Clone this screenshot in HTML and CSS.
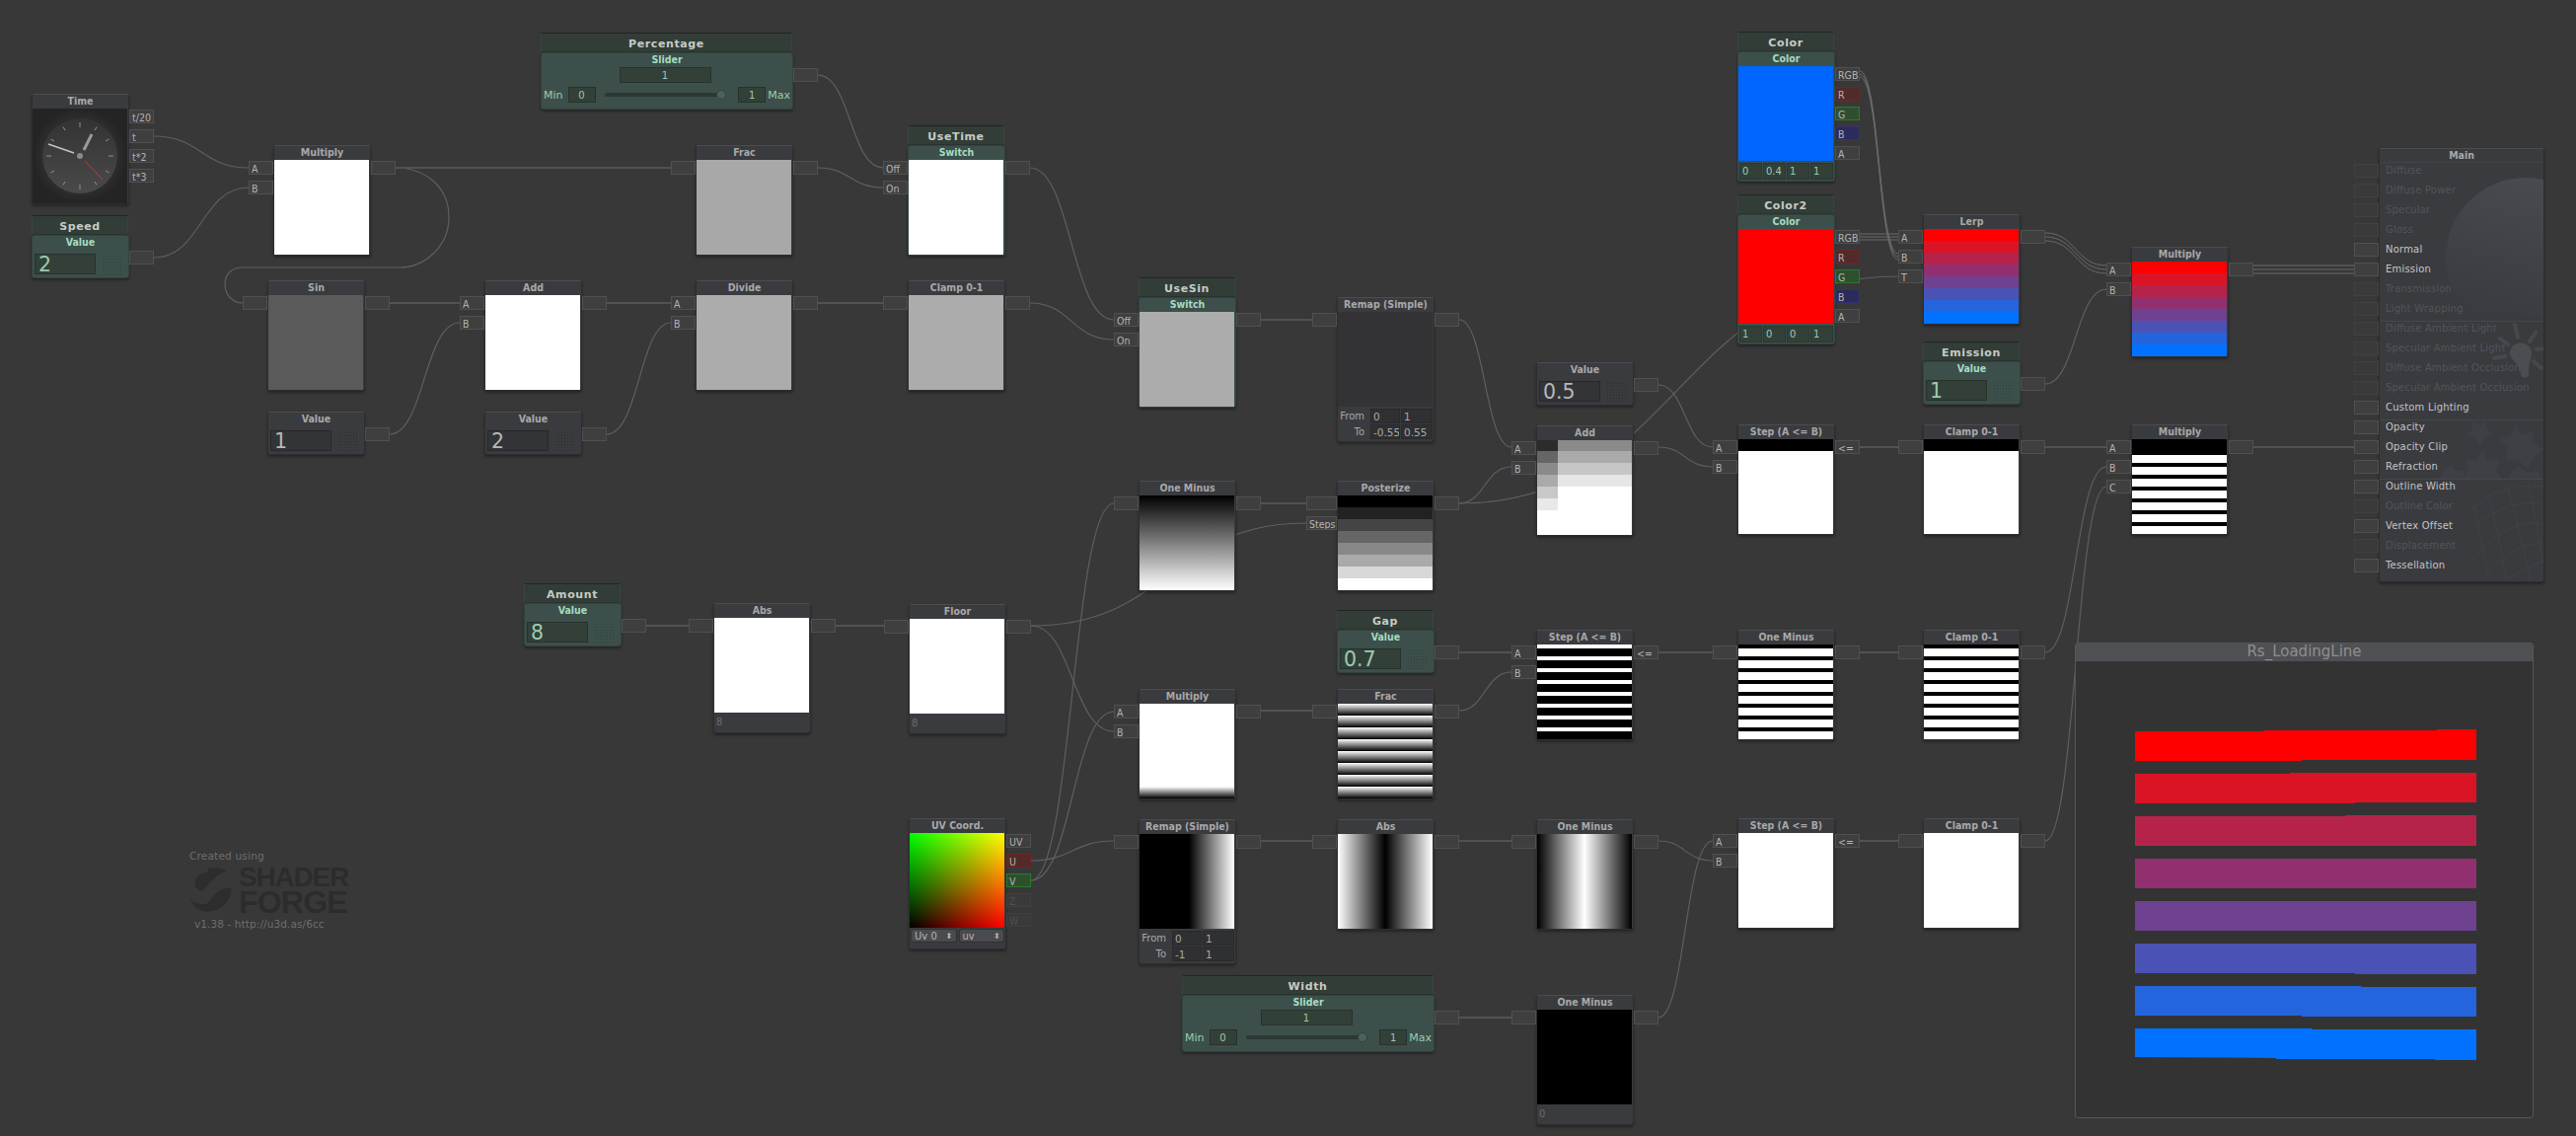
FILE: index.html
```html
<!DOCTYPE html>
<html lang="en">
<head>
<meta charset="utf-8">
<title>Shader Forge - Rs_LoadingLine</title>
<link rel="stylesheet" href="styles.css">
</head>
<body>
<div class="canvas">

<svg class="wires" width="2611" height="1151" viewBox="0 0 2611 1151">
  <g class="curve">
    <path d="M156,138 C204,138 204,170 252,170"/>
    <path d="M156,261 C204,261 204,190 252,190"/>
    <path d="M400,170 C432,170 455,190 455,220 C455,250 430,271 405,271 L245,271 C235,271 228,278 228,288 C228,298 235,307 246,307"/>
    <path d="M395,440 C430,440 430,327 466,327"/>
    <path d="M615,440 C648,440 648,327 680,327"/>
    <path d="M829,76 C862,76 862,170 895,170"/>
    <path d="M829,170 C862,170 862,190 895,190"/>
    <path d="M1044,170 C1086,170 1086,324 1129,324"/>
    <path d="M1044,307 C1086,307 1086,344 1129,344"/>
    <path d="M1479,324 C1505,324 1505,453 1532,453"/>
    <path d="M1681,390 C1708,390 1708,453 1736,453"/>
    <path d="M1681,453 C1708,453 1708,473 1736,473"/>
    <path d="M1479,510 C1505,510 1505,473 1532,473"/>
    <path d="M1479,510 C1700,510 1700,280 1924,280"/>
    <path d="M1045,634 C1185,634 1185,530 1324,530"/>
    <path d="M1045,634 C1087,634 1087,741 1129,741"/>
    <path d="M1045,892 C1087,892 1087,510 1129,510"/>
    <path d="M1045,892 C1087,892 1087,721 1129,721"/>
    <path d="M1045,872 C1087,872 1087,852 1129,852"/>
    <path d="M1479,720 C1505,720 1505,681 1532,681"/>
    <path d="M2073,661 C2104,661 2104,473 2135,473"/>
    <path d="M2073,852 C2104,852 2104,493 2135,493"/>
    <path d="M1681,852 C1708,852 1708,872 1736,872"/>
    <path d="M1681,1031 C1708,1031 1708,852 1736,852"/>
    <path d="M2073,389 C2104,389 2104,293 2135,293"/>
  </g>
  <g class="straight">
    <path d="M400,170 L680,170"/>
    <path d="M395,307 L466,307"/>
    <path d="M615,307 L680,307"/>
    <path d="M829,307 L895,307"/>
    <path d="M1278,324 L1331,324"/>
    <path d="M1885,453 L1924,453"/>
    <path d="M2073,453 L2135,453"/>
    <path d="M2283,453 L2386,453"/>
    <path d="M655,634 L698,634"/>
    <path d="M847,634 L896,634"/>
    <path d="M1278,510 L1324,510"/>
    <path d="M1479,661 L1532,661"/>
    <path d="M1681,661 L1736,661"/>
    <path d="M1885,661 L1924,661"/>
    <path d="M1278,720 L1331,720"/>
    <path d="M1278,852 L1331,852"/>
    <path d="M1479,852 L1532,852"/>
    <path d="M1479,1031 L1532,1031"/>
    <path d="M1885,852 L1924,852"/>
  </g>
  <g class="triple">
    <path d="M1885,72 C1905,72 1904,257 1924,257"/>
    <path d="M1885,75 C1905,75 1904,260 1924,260"/>
    <path d="M1885,78 C1905,78 1904,263 1924,263"/>
    <path d="M1885,237 L1924,237"/>
    <path d="M1885,240 L1924,240"/>
    <path d="M1885,243 L1924,243"/>
    <path d="M2073,236 C2104,236 2104,269 2135,269"/>
    <path d="M2073,240 C2104,240 2104,273 2135,273"/>
    <path d="M2073,244 C2104,244 2104,277 2135,277"/>
    <path d="M2283,269 L2386,269"/>
    <path d="M2283,273 L2386,273"/>
    <path d="M2283,277 L2386,277"/>
  </g>
</svg>

<div class="logo">
  <div class="logo-note">Created using</div>
  <div class="logo-mark">
    <svg class="logo-icon" width="44" height="50" viewBox="65 112 135 150">
      <path d="M122,116 C150,112 168,116 180,124 C152,132 130,160 108,184 C96,190 80,174 82,160 C85,140 102,128 124,128 Z"/>
      <path d="M196,178 C170,170 142,194 126,220 C114,234 90,228 68,212 C74,236 100,252 126,250 C166,246 194,216 196,178 Z"/>
    </svg>
    <div class="logo-words">
      <div class="logo-shader">SHADER</div>
      <div class="logo-forge">FORGE</div>
    </div>
  </div>
  <div class="logo-version">v1.38 - http://u3d.as/6cc</div>
</div>

<!-- Time -->
<div class="node n-time">
  <div class="head">Time</div>
  <svg class="clock" width="96" height="96" viewBox="0 0 96 96">
    <defs>
      <radialGradient id="clockBg"><stop offset="0.5" stop-color="#3a3a3a"/><stop offset="1" stop-color="#242424"/></radialGradient>
      <linearGradient id="clockFace" x1="0" y1="0" x2="0" y2="1"><stop offset="0" stop-color="#333"/><stop offset="1" stop-color="#4a4a4a"/></linearGradient>
    </defs>
    <rect width="96" height="96" fill="url(#clockBg)"/>
    <circle cx="48" cy="48" r="38.5" fill="url(#clockFace)" stroke="#2c2c2c"/>
    <g class="ticks">
      <path d="M48,14V19M48,77V82M14,48H19M77,48H82M65,18.6L63,22M31,18.6L33,22M77.4,31L74,33M18.6,31L22,33M77.4,65L74,63M18.6,65L22,63M65,77.4L63,74M31,77.4L33,74"/>
    </g>
    <path class="hand-h" d="M52,42L60,26"/>
    <path class="hand-m" d="M42,45L16,36"/>
    <path class="hand-s" d="M53,53L71,72"/>
    <circle cx="48" cy="48" r="3" fill="#8a8a8a"/>
  </svg>
  <div class="ports out">
    <div class="port">t/20</div><div class="port">t</div><div class="port">t*2</div><div class="port">t*3</div>
  </div>
</div>

<!-- Speed -->
<div class="node param n-speed">
  <div class="title">Speed</div>
  <div class="body">
    <div class="head">Value</div>
    <div class="value-row"><div class="val">2</div><div class="dots"></div></div>
  </div>
  <div class="ports out"><div class="port"></div></div>
</div>

<!-- Percentage -->
<div class="node param wide n-percentage">
  <div class="title">Percentage</div>
  <div class="body">
    <div class="head">Slider</div>
    <div class="slider-val">1</div>
    <div class="slider-row">
      <span>Min</span><span class="box">0</span>
      <div class="track"><div class="thumb"></div></div>
      <span class="box">1</span><span>Max</span>
    </div>
  </div>
  <div class="ports out"><div class="port"></div></div>
</div>

<div class="node n-multiply1">
  <div class="head">Multiply</div><div class="pv white"></div>
  <div class="ports in"><div class="port">A</div><div class="port">B</div></div>
  <div class="ports out"><div class="port"></div></div>
</div>

<div class="node n-frac1">
  <div class="head">Frac</div><div class="pv gray-a8"></div>
  <div class="ports in"><div class="port"></div></div>
  <div class="ports out"><div class="port"></div></div>
</div>

<div class="node param n-usetime">
  <div class="title">UseTime</div>
  <div class="body">
    <div class="head">Switch</div><div class="pv white"></div>
  </div>
  <div class="ports in"><div class="port">Off</div><div class="port">On</div></div>
  <div class="ports out"><div class="port"></div></div>
</div>

<div class="node n-sin">
  <div class="head">Sin</div><div class="pv gray-5a"></div>
  <div class="ports in"><div class="port"></div></div>
  <div class="ports out"><div class="port"></div></div>
</div>

<div class="node n-add1">
  <div class="head">Add</div><div class="pv white"></div>
  <div class="ports in"><div class="port">A</div><div class="port">B</div></div>
  <div class="ports out"><div class="port"></div></div>
</div>

<div class="node n-divide">
  <div class="head">Divide</div><div class="pv gray-ac"></div>
  <div class="ports in"><div class="port">A</div><div class="port">B</div></div>
  <div class="ports out"><div class="port"></div></div>
</div>

<div class="node n-clamp1">
  <div class="head">Clamp 0-1</div><div class="pv gray-ac"></div>
  <div class="ports in"><div class="port"></div></div>
  <div class="ports out"><div class="port"></div></div>
</div>

<div class="node valnode n-value1">
  <div class="head">Value</div>
  <div class="value-row"><div class="val">1</div><div class="dots"></div></div>
  <div class="ports out"><div class="port"></div></div>
</div>

<div class="node valnode n-value2">
  <div class="head">Value</div>
  <div class="value-row"><div class="val">2</div><div class="dots"></div></div>
  <div class="ports out"><div class="port"></div></div>
</div>

<div class="node param n-usesin">
  <div class="title">UseSin</div>
  <div class="body">
    <div class="head">Switch</div><div class="pv gray-ac"></div>
  </div>
  <div class="ports in"><div class="port">Off</div><div class="port">On</div></div>
  <div class="ports out"><div class="port"></div></div>
</div>

<div class="node n-remap1">
  <div class="head">Remap (Simple)</div><div class="pv dark"></div>
  <div class="remap">
    <span class="lbl">From</span><span class="cell">0</span><span class="cell">1</span>
    <span class="lbl">To</span><span class="cell">-0.55</span><span class="cell">0.55</span>
  </div>
  <div class="ports in"><div class="port"></div></div>
  <div class="ports out"><div class="port"></div></div>
</div>

<div class="node valnode n-value3">
  <div class="head">Value</div>
  <div class="value-row"><div class="val">0.5</div><div class="dots"></div></div>
  <div class="ports out"><div class="port"></div></div>
</div>

<div class="node n-add2">
  <div class="head">Add</div><div class="pv add-stairs"></div>
  <div class="ports in"><div class="port">A</div><div class="port">B</div></div>
  <div class="ports out"><div class="port"></div></div>
</div>

<div class="node n-oneminus1">
  <div class="head">One Minus</div><div class="pv ramp-down"></div>
  <div class="ports in"><div class="port"></div></div>
  <div class="ports out"><div class="port"></div></div>
</div>

<div class="node n-posterize">
  <div class="head">Posterize</div><div class="pv posterize"></div>
  <div class="ports in"><div class="port wide-port"></div><div class="port wide-port">Steps</div></div>
  <div class="ports out"><div class="port"></div></div>
</div>

<!-- Amount -->
<div class="node param n-amount">
  <div class="title">Amount</div>
  <div class="body">
    <div class="head">Value</div>
    <div class="value-row"><div class="val">8</div><div class="dots"></div></div>
  </div>
  <div class="ports out"><div class="port"></div></div>
</div>

<div class="node n-abs1">
  <div class="head">Abs</div><div class="pv white"></div>
  <div class="foot">8</div>
  <div class="ports in"><div class="port"></div></div>
  <div class="ports out"><div class="port"></div></div>
</div>

<div class="node n-floor">
  <div class="head">Floor</div><div class="pv white"></div>
  <div class="foot">8</div>
  <div class="ports in"><div class="port"></div></div>
  <div class="ports out"><div class="port"></div></div>
</div>

<div class="node param n-gap">
  <div class="title">Gap</div>
  <div class="body">
    <div class="head">Value</div>
    <div class="value-row"><div class="val">0.7</div><div class="dots"></div></div>
  </div>
  <div class="ports out"><div class="port"></div></div>
</div>

<div class="node n-step2">
  <div class="head">Step (A &lt;= B)</div><div class="pv stripes-w4"></div>
  <div class="ports in"><div class="port">A</div><div class="port">B</div></div>
  <div class="ports out"><div class="port">&lt;=</div></div>
</div>

<div class="node n-multiply2">
  <div class="head">Multiply</div><div class="pv white-fade"></div>
  <div class="ports in"><div class="port">A</div><div class="port">B</div></div>
  <div class="ports out"><div class="port"></div></div>
</div>

<div class="node n-frac2">
  <div class="head">Frac</div><div class="pv frac-bands"></div>
  <div class="ports in"><div class="port"></div></div>
  <div class="ports out"><div class="port"></div></div>
</div>

<!-- UV -->
<div class="node n-uv">
  <div class="head">UV Coord.</div><div class="pv uv"></div>
  <div class="selects">
    <div class="select"><span>Uv 0</span><span class="updown">⬍</span></div>
    <div class="select"><span>uv</span><span class="updown">⬍</span></div>
  </div>
  <div class="ports out">
    <div class="port">UV</div><div class="port red">U</div><div class="port green">V</div><div class="port off">Z</div><div class="port off">W</div>
  </div>
</div>

<div class="node n-remap2">
  <div class="head">Remap (Simple)</div><div class="pv ramp-right"></div>
  <div class="remap">
    <span class="lbl">From</span><span class="cell">0</span><span class="cell">1</span>
    <span class="lbl">To</span><span class="cell">-1</span><span class="cell">1</span>
  </div>
  <div class="ports in"><div class="port"></div></div>
  <div class="ports out"><div class="port"></div></div>
</div>

<div class="node n-abs2">
  <div class="head">Abs</div><div class="pv v-dark-center"></div>
  <div class="ports in"><div class="port"></div></div>
  <div class="ports out"><div class="port"></div></div>
</div>

<div class="node n-oneminus3">
  <div class="head">One Minus</div><div class="pv v-light-center"></div>
  <div class="ports in"><div class="port"></div></div>
  <div class="ports out"><div class="port"></div></div>
</div>

<div class="node param wide n-width">
  <div class="title">Width</div>
  <div class="body">
    <div class="head">Slider</div>
    <div class="slider-val">1</div>
    <div class="slider-row">
      <span>Min</span><span class="box">0</span>
      <div class="track"><div class="thumb"></div></div>
      <span class="box">1</span><span>Max</span>
    </div>
  </div>
  <div class="ports out"><div class="port"></div></div>
</div>

<div class="node n-oneminus4">
  <div class="head">One Minus</div><div class="pv black"></div>
  <div class="foot">0</div>
  <div class="ports in"><div class="port"></div></div>
  <div class="ports out"><div class="port"></div></div>
</div>

<!-- Colors -->
<div class="node param n-color">
  <div class="title">Color</div>
  <div class="body">
    <div class="head">Color</div><div class="pv blue"></div>
    <div class="cells"><span>0</span><span>0.4</span><span>1</span><span>1</span></div>
  </div>
  <div class="ports out">
    <div class="port">RGB</div><div class="port red">R</div><div class="port green">G</div><div class="port blue-port">B</div><div class="port">A</div>
  </div>
</div>

<div class="node param n-color2">
  <div class="title">Color2</div>
  <div class="body">
    <div class="head">Color</div><div class="pv red-fill"></div>
    <div class="cells"><span>1</span><span>0</span><span>0</span><span>1</span></div>
  </div>
  <div class="ports out">
    <div class="port">RGB</div><div class="port red">R</div><div class="port green">G</div><div class="port blue-port">B</div><div class="port">A</div>
  </div>
</div>

<div class="node n-lerp">
  <div class="head">Lerp</div><div class="pv bands"></div>
  <div class="ports in"><div class="port">A</div><div class="port">B</div><div class="port">T</div></div>
  <div class="ports out"><div class="port"></div></div>
</div>

<div class="node n-multiply3">
  <div class="head">Multiply</div><div class="pv bands"></div>
  <div class="ports in"><div class="port">A</div><div class="port">B</div></div>
  <div class="ports out"><div class="port"></div></div>
</div>

<div class="node param n-emission">
  <div class="title">Emission</div>
  <div class="body">
    <div class="head">Value</div>
    <div class="value-row"><div class="val">1</div><div class="dots"></div></div>
  </div>
  <div class="ports out"><div class="port"></div></div>
</div>

<div class="node n-step1">
  <div class="head">Step (A &lt;= B)</div><div class="pv top-black"></div>
  <div class="ports in"><div class="port">A</div><div class="port">B</div></div>
  <div class="ports out"><div class="port">&lt;=</div></div>
</div>

<div class="node n-clamp2">
  <div class="head">Clamp 0-1</div><div class="pv top-black"></div>
  <div class="ports in"><div class="port"></div></div>
  <div class="ports out"><div class="port"></div></div>
</div>

<div class="node n-multiply4">
  <div class="head">Multiply</div><div class="pv stripes-final"></div>
  <div class="ports in"><div class="port">A</div><div class="port">B</div><div class="port">C</div></div>
  <div class="ports out"><div class="port"></div></div>
</div>

<div class="node n-oneminus2">
  <div class="head">One Minus</div><div class="pv stripes-b4"></div>
  <div class="ports in"><div class="port"></div></div>
  <div class="ports out"><div class="port"></div></div>
</div>

<div class="node n-clamp3">
  <div class="head">Clamp 0-1</div><div class="pv stripes-b4"></div>
  <div class="ports in"><div class="port"></div></div>
  <div class="ports out"><div class="port"></div></div>
</div>

<div class="node n-step3">
  <div class="head">Step (A &lt;= B)</div><div class="pv white"></div>
  <div class="ports in"><div class="port">A</div><div class="port">B</div></div>
  <div class="ports out"><div class="port">&lt;=</div></div>
</div>

<div class="node n-clamp4">
  <div class="head">Clamp 0-1</div><div class="pv white"></div>
  <div class="ports in"><div class="port"></div></div>
  <div class="ports out"><div class="port"></div></div>
</div>

<!-- Main -->
<div class="node n-main">
  <svg class="main-art" width="166" height="439" viewBox="0 0 166 439">
    <defs>
      <linearGradient id="sphere" x1="0.7" y1="0" x2="0.4" y2="1"><stop offset="0" stop-color="#4a4b50"/><stop offset="0.85" stop-color="#3b3c41"/></linearGradient>
      <clipPath id="sphereClip"><rect width="166" height="171"/></clipPath>
    </defs>
    <circle cx="148" cy="110" r="81" fill="url(#sphere)" clip-path="url(#sphereClip)"/>
    <g class="rays"><path d="M137,178L140,191M158,186L152,195M122,192L130,198M116,212L127,210M167,202L159,203M156,215L164,222"/></g>
    <path class="bulb" d="M132,207 C132,193 154,193 154,207 C154,213 151,216 151,228 C151,233 143,233 143,228 C142,216 132,214 132,207 Z"/>
    <g class="leaves">
      <path d="M94,276 L102,280 L108,275 L108,283 L114,288 L106,292 L102,300 L97,292 L88,290 L94,284 Z"/>
      <path d="M138,278 L144,290 L156,286 L154,298 L166,304 L156,312 L150,324 L140,314 L128,316 L130,302 L122,294 L134,290 Z"/>
      <path d="M104,304 L110,316 L122,314 L118,326 L124,334 L84,334 L90,326 L86,314 L98,316 Z"/>
      <path d="M72,320 L78,326 L86,326 L84,334 L60,334 L64,326 Z"/>
      <path d="M140,322 L150,328 L160,326 L164,334 L130,334 L134,326 Z"/>
    </g>
    <g class="mesh">
      <path d="M90,370 C110,345 140,338 166,342M86,395 C110,365 140,355 166,360M90,420 C115,390 140,375 166,380M108,432 C125,412 145,398 166,400M130,436 C140,428 155,420 166,418"/>
      <path d="M110,350 C118,380 125,410 128,438M130,342 C138,375 148,410 152,438M150,338 C156,365 162,395 166,420M96,362 C100,385 106,410 110,432"/>
    </g>
  </svg>
  <div class="main-head">Main</div>
  <div class="main-rows">
    <div class="row off"><div class="port"></div>Diffuse</div>
    <div class="row off"><div class="port"></div>Diffuse Power</div>
    <div class="row off"><div class="port"></div>Specular</div>
    <div class="row off"><div class="port"></div>Gloss</div>
    <div class="row"><div class="port"></div>Normal</div>
    <div class="row"><div class="port"></div>Emission</div>
    <div class="row off"><div class="port"></div>Transmission</div>
    <div class="row off sep"><div class="port"></div>Light Wrapping</div>
    <div class="row off"><div class="port"></div>Diffuse Ambient Light</div>
    <div class="row off"><div class="port"></div>Specular Ambient Light</div>
    <div class="row off"><div class="port"></div>Diffuse Ambient Occlusion</div>
    <div class="row off"><div class="port"></div>Specular Ambient Occlusion</div>
    <div class="row sep"><div class="port"></div>Custom Lighting</div>
    <div class="row"><div class="port"></div>Opacity</div>
    <div class="row"><div class="port"></div>Opacity Clip</div>
    <div class="row sep"><div class="port"></div>Refraction</div>
    <div class="row"><div class="port"></div>Outline Width</div>
    <div class="row off"><div class="port"></div>Outline Color</div>
    <div class="row"><div class="port"></div>Vertex Offset</div>
    <div class="row off"><div class="port"></div>Displacement</div>
    <div class="row"><div class="port"></div>Tessellation</div>
  </div>
</div>

<!-- Preview window -->
<div class="preview-win">
  <div class="preview-head">Rs_LoadingLine</div>
  <svg class="preview-art" width="463" height="462" viewBox="2104 670 463 462">
    <polygon fill="#ff0000" points="2164,741 2295,741 2295,740 2470,740 2470,739 2510,739 2510,770 2333,770 2333,771 2164,771"/>
    <polygon fill="#da1425" points="2164,784 2321,784 2321,783 2510,783 2510,813 2387,813 2387,814 2164,814"/>
    <polygon fill="#b6234a" points="2164,827 2377,827 2377,826 2510,826 2510,857 2164,857"/>
    <polygon fill="#92306f" points="2164,870 2510,870 2510,900 2164,900"/>
    <polygon fill="#6e4290" points="2164,913 2510,913 2510,943 2164,943"/>
    <polygon fill="#4a52b5" points="2164,956 2510,956 2510,987 2387,987 2387,986 2164,986"/>
    <polygon fill="#2464dc" points="2164,999 2393,999 2393,1000 2510,1000 2510,1030 2333,1030 2333,1029 2164,1029"/>
    <polygon fill="#0072ff" points="2164,1042 2343,1042 2343,1043 2510,1043 2510,1074 2468,1074 2468,1073 2307,1073 2307,1072 2164,1071"/>
  </svg>
</div>

</div>
</body>
</html>
```

FILE: styles.css
```css
* { box-sizing: border-box; }
html, body { margin: 0; padding: 0; background: #383838; overflow: hidden; }

.canvas {
  position: relative;
  width: 2611px;
  height: 1151px;
  overflow: hidden;
  background: #383838;
  font-family: "DejaVu Sans", "Liberation Sans", sans-serif;
  font-size: 10px;
  color: #a9a9a9;
}

/* wires */
.wires { position: absolute; left: 0; top: 0; fill: none; }
.curve path { stroke: #5f5f5f; stroke-width: 1.2; }
.straight path { stroke: #525252; stroke-width: 2.2; }
.triple path { stroke: #6a6a6a; stroke-width: 1; }

/* nodes */
.node {
  position: absolute;
  width: 99px;
  background: #3a3b3f;
  border: 1px solid #2e2e30;
  border-top-color: #4c4d51;
  border-radius: 3px;
  box-shadow: 0 2px 3px rgba(0, 0, 0, .35);
}
.head {
  height: 14px;
  line-height: 13px;
  text-align: center;
  font-family: "DejaVu Sans Condensed", "DejaVu Sans", sans-serif;
  font-stretch: condensed;
  font-weight: bold;
  font-size: 10.5px;
  color: #a8a8a8;
  background: #3a3b3f;
  white-space: nowrap;
}
.pv { width: 96px; height: 96px; }

.ports {
  position: absolute;
  top: 15px;
  display: flex;
  flex-direction: column;
  gap: 6px;
}
.ports.in { right: 100%; margin-right: 1px; align-items: flex-end; }
.ports.out { left: 100%; margin-left: 1px; }
.port {
  width: 25px;
  height: 14px;
  line-height: 14px;
  padding-left: 2px;
  background: #3f3f3f;
  border: 1px solid #505050;
  color: #b4b4b4;
  font-family: "DejaVu Sans Condensed", "DejaVu Sans", sans-serif;
  font-stretch: condensed;
  font-size: 10.5px;
  white-space: nowrap;
  overflow: hidden;
}
.port.wide-port { width: 31px; }
.port.red { background: #522a2a; border-color: #6e2626; }
.port.green { background: #2e4f2e; border-color: #2a7a2a; }
.port.blue-port { background: #2b2b5c; border-color: #33336e; }
.port.off { background: #3a3a3a; border-color: #404040; color: #4f4f4f; }

/* params */
.param { background: none; border: 0; box-shadow: none; }
.param .ports { top: 36px; }
.param .ports.in { margin-right: 0; }
.param .ports.out { margin-left: 0; }
.title {
  width: 98px;
  height: 20px;
  line-height: 21px;
  text-align: center;
  font-weight: bold;
  font-size: 11px;
  letter-spacing: .6px;
  color: #c6cbc6;
  background: #323d37;
  border-top: 1px solid #1f2623;
  border-bottom: 1px solid #2a332e;
  border-left: 1px solid #39443e;
  border-right: 1px solid #39443e;
}
.param .body {
  width: 99px;
  border: 1px solid #33433e;
  border-radius: 3px;
  background: #3c4f4b;
  box-shadow: 0 2px 3px rgba(0, 0, 0, .35);
}
.param .head { background: none; color: #a6dcc0; }
.value-row { display: flex; align-items: center; gap: 6px; padding: 5px 2px 4px; height: 28px; }
.val {
  width: 62px;
  height: 21px;
  line-height: 20px;
  padding-left: 3px;
  font-size: 20.5px;
  color: #b8b8b8;
  background: #333438;
  border: 1px solid #28282a;
}
.param .val { background: #324038; border-color: #27322d; color: #9ccbb0; }
.dots {
  width: 20px;
  height: 20px;
  background-image: radial-gradient(circle, #2d2e30 .8px, transparent 1px);
  background-size: 3px 3px;
}
.param .dots { background-image: radial-gradient(circle, #31423c .8px, transparent 1px); }
.valnode { height: 44px; }

/* sliders */
.wide { width: 256px; }
.wide .title { width: 255px; }
.wide .body { width: 256px; height: 58px; }
.slider-val {
  width: 93px;
  height: 16px;
  line-height: 15px;
  margin: 0 auto;
  position: relative;
  left: -2px;
  text-align: center;
  font-size: 10px;
  color: #9ccbb0;
  background: #324038;
  border: 1px solid #27322d;
}
.slider-row {
  display: flex;
  align-items: center;
  gap: 2px;
  padding: 4px 2px 0;
  font-size: 11px;
  color: #9ccbb0;
}
.box {
  width: 28px;
  height: 16px;
  line-height: 15px;
  margin-left: 3px;
  text-align: center;
  font-size: 10px;
  background: #324038;
  border: 1px solid #27322d;
}
.track {
  position: relative;
  flex: 1;
  height: 4px;
  margin: 0 7px;
  border-radius: 2px;
  background: #2b3833;
}
.thumb {
  position: absolute;
  right: 0;
  top: -3px;
  width: 10px;
  height: 10px;
  border-radius: 50%;
  background: #4b6259;
  border: 1px solid #33433e;
}

/* preview fills */
.white { background: #fff; }
.black { background: #000; }
.dark { background: #333335; }
.gray-a8 { background: #a8a8a8; }
.gray-ac { background: #acacac; }
.gray-5a { background: #5a5a5a; }
.blue { background: #0066ff; }
.red-fill { background: #ff0000; }
.ramp-down { background: linear-gradient(#000, #fff); }
.ramp-right { background: linear-gradient(to right, #000 52%, #fff 100%); }
.v-dark-center { background: linear-gradient(to right, #fff, #000 50%, #fff); }
.v-light-center { background: linear-gradient(to right, #000, #fff 50%, #000); }
.white-fade { background: linear-gradient(#fff 84px, #000 96px); }
.frac-bands { background: repeating-linear-gradient(#fff 0, #000 12px); }
.stripes-w4 { background: repeating-linear-gradient(#fff 0, #fff 4px, #000 4px, #000 12px); }
.stripes-b4 { background: repeating-linear-gradient(#000 0, #000 4px, #fff 4px, #fff 12px); }
.top-black { background: linear-gradient(#000 12px, #fff 12px); }
.stripes-final {
  background:
    linear-gradient(#000 16px, transparent 16px),
    repeating-linear-gradient(#000 0, #000 4px, #fff 4px, #fff 12px);
}
.posterize {
  background: linear-gradient(#000 0 12px, #222 12px 24px, #444 24px 36px, #666 36px 48px, #888 48px 60px, #aaa 60px 72px, #d8d8d8 72px 84px, #fff 84px);
}
.bands {
  background: linear-gradient(#ff0000 0 12px, #da1425 12px 24px, #b6234a 24px 36px, #92306f 36px 48px, #6e4290 48px 60px, #4a52b5 60px 72px, #2464dc 72px 84px, #0072ff 84px);
}
.add-stairs {
  background:
    linear-gradient(#2c2c2c 0 11px, #666 11px 23px, #8a8a8a 23px 35px, #aaa 35px 47px, #c8c8c8 47px 59px, #e8e8e8 59px 71px, #fff 71px) left top / 21px 100% no-repeat,
    linear-gradient(#8a8a8a 0 11px, #aaa 11px 23px, #c6c6c6 23px 35px, #e6e6e6 35px 47px, #fff 47px);
}
.uv {
  background-image: linear-gradient(to right, #000, #f00), linear-gradient(to top, #000, #0f0);
  background-blend-mode: screen;
}

/* footers */
.foot { height: 20px; line-height: 20px; padding-left: 2px; color: #6c6c6c; font-size: 10px; }
.remap {
  display: grid;
  grid-template-columns: 32px 30px 32px;
  grid-auto-rows: 15px;
  row-gap: 1px;
  column-gap: 1px;
  padding: 2px 0 2px;
}
.lbl { line-height: 15px; text-align: right; padding-right: 5px; color: #a8a8a8; }
.cell {
  overflow: hidden;
  white-space: nowrap;
  line-height: 14px;
  padding-left: 2px;
  font-size: 10.5px;
  background: #2f3032;
  border: 1px solid #2a2a2c;
  color: #a8a8a8;
}
.cells {
  display: flex;
  gap: 1px;
  padding: 2px 1px 1px;
  color: #9ccbb0;
}
.cells span {
  width: 23px;
  height: 17px;
  line-height: 15px;
  padding-left: 2px;
  background: #324038;
  border: 1px solid #2a3631;
  overflow: hidden;
  white-space: nowrap;
}
.selects { display: flex; gap: 2px; padding: 1px 1px 6px; }
.select {
  flex: 1;
  height: 14px;
  line-height: 13px;
  display: flex;
  justify-content: space-between;
  padding: 0 3px;
  border-radius: 3px;
  background: #4a4b4e;
  border: 1px solid #303032;
  color: #b4b4b4;
}
.updown { font-size: 8px; }

/* clock */
.clock { display: block; }
.ticks path { stroke: #909090; stroke-width: 1; fill: none; }
.hand-h { stroke: #9a9a9a; stroke-width: 3; }
.hand-m { stroke: #c4c4c4; stroke-width: 1.5; }
.hand-s { stroke: #c23a3a; stroke-width: 1; }

/* main */
.n-main { width: 168px; height: 440px; background: #3a3b3f; overflow: visible; }
.main-art { position: absolute; left: 0; top: 0; }
.rays path { stroke: #47484c; stroke-width: 4; stroke-linecap: round; fill: none; }
.bulb { fill: #4c4d51; }
.leaves path { fill: #3f4045; }
.mesh path { stroke: #444549; stroke-width: .7; fill: none; }
.main-head {
  position: relative;
  height: 14px;
  line-height: 13px;
  text-align: center;
  font-family: "DejaVu Sans Condensed", "DejaVu Sans", sans-serif;
  font-stretch: condensed;
  font-weight: bold;
  font-size: 10.5px;
  color: #a8a8a8;
  border-bottom: 1px solid #434448;
}
.main-rows { position: relative; padding-top: 1px; }
.row {
  position: relative;
  height: 20px;
  line-height: 14px;
  padding-left: 6px;
  letter-spacing: .2px;
  color: #c4c4c4;
  white-space: nowrap;
}
.row .port { position: absolute; right: 100%; top: 0; margin-right: 1px; }
.row.off { color: #52535a; }
.row.off .port { background: #3a3a3a; border-color: #414141; }
.row.sep { border-bottom: 1px solid #46474b; }

/* preview window */
.preview-win {
  position: absolute;
  left: 2103px;
  top: 651px;
  width: 465px;
  height: 482px;
  background: #333333;
  border: 1px solid #555659;
  border-radius: 3px;
  overflow: hidden;
}
.preview-head {
  height: 18px;
  line-height: 17px;
  text-align: center;
  font-size: 15px;
  color: #8e8e90;
  background: #4f5054;
}
.preview-art { display: block; }

/* logo */
.logo { position: absolute; left: 192px; top: 860px; width: 165px; }
.logo-note { font-size: 10.5px; line-height: 14px; color: #6e6e6e; letter-spacing: .2px; }
.logo-mark { display: flex; gap: 6px; margin-top: 3px; }
.logo-icon { display: block; margin-top: 1px; }
.logo-icon path { fill: #2d2d2d; }
.logo-words { font-family: "Liberation Sans", Arial, sans-serif; font-weight: bold; color: #2c2c2c; }
.logo-shader { font-size: 28px; line-height: 24px; letter-spacing: -1.2px; }
.logo-forge { font-size: 32px; line-height: 26px; letter-spacing: -.8px; }
.logo-version { margin-top: 1px; padding-left: 5px; font-size: 10.5px; line-height: 14px; color: #6e6e6e; letter-spacing: .1px; }

/* node places on the canvas */
.n-time { left: 32px; top: 95px; }
.n-speed { left: 32px; top: 218px; }
.n-percentage { left: 548px; top: 33px; }
.n-multiply1 { left: 277px; top: 147px; }
.n-frac1 { left: 705px; top: 147px; }
.n-usetime { left: 920px; top: 127px; }
.n-sin { left: 271px; top: 284px; }
.n-add1 { left: 491px; top: 284px; }
.n-divide { left: 705px; top: 284px; }
.n-clamp1 { left: 920px; top: 284px; }
.n-value1 { left: 271px; top: 417px; }
.n-value2 { left: 491px; top: 417px; }
.n-usesin { left: 1154px; top: 281px; }
.n-remap1 { left: 1355px; top: 301px; }
.n-value3 { left: 1557px; top: 367px; }
.n-add2 { left: 1557px; top: 431px; }
.n-oneminus1 { left: 1154px; top: 487px; }
.n-posterize { left: 1355px; top: 487px; }
.n-amount { left: 531px; top: 591px; }
.n-abs1 { left: 723px; top: 611px; }
.n-floor { left: 921px; top: 612px; }
.n-gap { left: 1355px; top: 618px; }
.n-step2 { left: 1557px; top: 638px; }
.n-multiply2 { left: 1154px; top: 698px; }
.n-frac2 { left: 1355px; top: 698px; }
.n-uv { left: 921px; top: 829px; }
.n-remap2 { left: 1154px; top: 830px; }
.n-abs2 { left: 1355px; top: 830px; }
.n-oneminus3 { left: 1557px; top: 830px; }
.n-width { left: 1198px; top: 988px; }
.n-oneminus4 { left: 1557px; top: 1008px; }
.n-color { left: 1761px; top: 32px; }
.n-color2 { left: 1761px; top: 197px; }
.n-lerp { left: 1949px; top: 217px; }
.n-multiply3 { left: 2160px; top: 250px; }
.n-emission { left: 1949px; top: 346px; }
.n-step1 { left: 1761px; top: 430px; }
.n-clamp2 { left: 1949px; top: 430px; }
.n-multiply4 { left: 2160px; top: 430px; }
.n-oneminus2 { left: 1761px; top: 638px; }
.n-clamp3 { left: 1949px; top: 638px; }
.n-step3 { left: 1761px; top: 829px; }
.n-clamp4 { left: 1949px; top: 829px; }
.n-main { left: 2411px; top: 150px; }
```
